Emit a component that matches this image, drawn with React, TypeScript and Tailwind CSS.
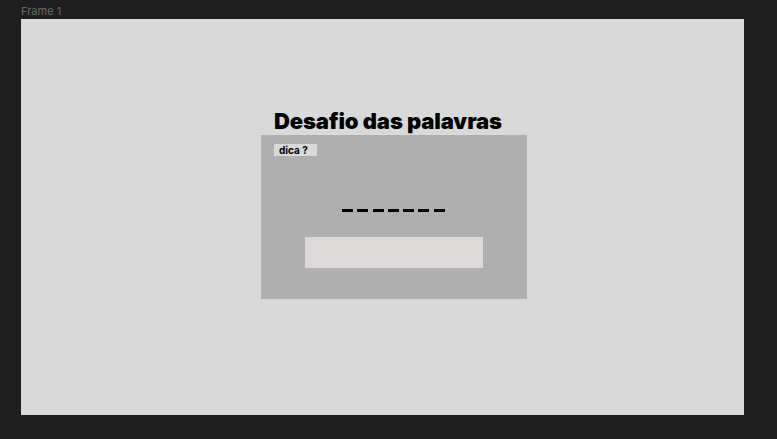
export default function App() {
  const slots = [0, 1, 2, 3, 4, 5, 6];
  return (
    <div className="w-[777px] h-[439px] bg-[#1e1e1e] px-[21px] pt-[4px] font-['Inter',sans-serif] overflow-hidden">
      <div className="h-[15px] text-[11px] leading-[15px] text-[#6b6b6b]">Frame 1</div>
      <div className="w-[723px] h-[396px] bg-[#d9d9d9] pl-[240px] pt-[88px]">
        <h1 className="ml-[13px] text-[22px] leading-[28px] font-black text-black tracking-[-0.1px]">
          Desafio das palavras
        </h1>
        <div className="w-[266px] h-[164px] bg-[#afafaf] pt-[9px] pl-[13px] flex flex-col">
          <button className="w-[43px] h-[12px] bg-[#d9d9d9] text-[10px] leading-[12px] font-bold text-black text-left pl-[5px]">
            dica ?
          </button>
          <div className="mt-[53px] ml-[68px] flex gap-[4.3px]">
            {slots.map((s) => (
              <div key={s} className="w-[11px] h-[3px] bg-black" />
            ))}
          </div>
          <input className="mt-[25px] ml-[31px] w-[178px] h-[31px] bg-[#dcd9d8] outline-none border-0" />
        </div>
      </div>
    </div>
  );
}
